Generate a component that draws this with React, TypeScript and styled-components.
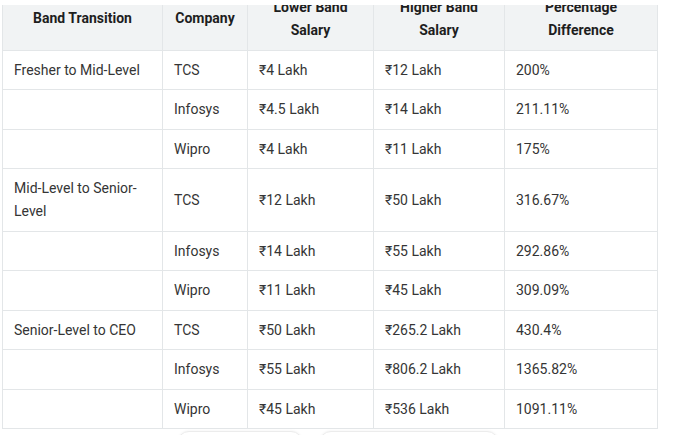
import styled, { createGlobalStyle } from 'styled-components';

const GlobalStyle = createGlobalStyle`
    html, body {
        margin: 0;
        padding: 0;
        background: #ffffff;
    }
`;

const Viewport = styled.div`
    position: relative;
    height: 435px;
    overflow: hidden;
    padding-left: 2px;
    font-family: Roboto, "Noto Sans", "DejaVu Sans", sans-serif;
    font-size: 14px;
    color: #353535;
`;

const TopBar = styled.div`
    position: absolute;
    top: 0;
    left: 0;
    right: 0;
    height: 5px;
    background: #ffffff;
    z-index: 2;
`;

const Table = styled.table`
    margin-top: -13px;
    width: 655px;
    border-collapse: collapse;
    table-layout: fixed;
`;

const HeadCell = styled.th`
    background: #f1f3f4;
    color: #1e1e1e;
    font-weight: 700;
    line-height: 23px;
    padding: 7.75px 12px;
    text-align: center;
    vertical-align: middle;
    border: 1px solid #e3e6e8;
`;

const Cell = styled.td`
    line-height: 23px;
    padding: 8px 11px 7.5px;
    text-align: left;
    vertical-align: middle;
    border: 1px solid #e3e6e8;
`;

const Actions = styled.div`
    display: flex;
    gap: 16px;
    margin: 2px 0 0 175px;
`;

const Pill = styled.div<{ $width: number }>`
    width: ${(p) => p.$width}px;
    height: 34px;
    border: 1px solid #ececec;
    border-radius: 12px;
    background: #ffffff;
    box-shadow: 0 -1px 2px rgba(0, 0, 0, 0.03);
`;

type Row = {
    band: string,
    company: string,
    lower: string,
    higher: string,
    diff: string,
};

const rows: Row[] = [
    { band: 'Fresher to Mid-Level', company: 'TCS', lower: '₹4 Lakh', higher: '₹12 Lakh', diff: '200%' },
    { band: '', company: 'Infosys', lower: '₹4.5 Lakh', higher: '₹14 Lakh', diff: '211.11%' },
    { band: '', company: 'Wipro', lower: '₹4 Lakh', higher: '₹11 Lakh', diff: '175%' },
    { band: 'Mid-Level to Senior-Level', company: 'TCS', lower: '₹12 Lakh', higher: '₹50 Lakh', diff: '316.67%' },
    { band: '', company: 'Infosys', lower: '₹14 Lakh', higher: '₹55 Lakh', diff: '292.86%' },
    { band: '', company: 'Wipro', lower: '₹11 Lakh', higher: '₹45 Lakh', diff: '309.09%' },
    { band: 'Senior-Level to CEO', company: 'TCS', lower: '₹50 Lakh', higher: '₹265.2 Lakh', diff: '430.4%' },
    { band: '', company: 'Infosys', lower: '₹55 Lakh', higher: '₹806.2 Lakh', diff: '1365.82%' },
    { band: '', company: 'Wipro', lower: '₹45 Lakh', higher: '₹536 Lakh', diff: '1091.11%' },
];

const widths = [160, 85, 126, 131, 153];

export default function App() {
    return (
        <Viewport>
            <GlobalStyle />
            <TopBar />
            <Table>
                <colgroup>
                    {widths.map((w, i) => <col key={i} style={{ width: w }} />)}
                </colgroup>
                <thead>
                    <tr>
                        <HeadCell>Band Transition</HeadCell>
                        <HeadCell>Company</HeadCell>
                        <HeadCell>Lower Band Salary</HeadCell>
                        <HeadCell>Higher Band Salary</HeadCell>
                        <HeadCell>Percentage Difference</HeadCell>
                    </tr>
                </thead>
                <tbody>
                    {rows.map((r, i) => (
                        <tr key={i}>
                            <Cell>{r.band}</Cell>
                            <Cell>{r.company}</Cell>
                            <Cell>{r.lower}</Cell>
                            <Cell>{r.higher}</Cell>
                            <Cell>{r.diff}</Cell>
                        </tr>
                    ))}
                </tbody>
            </Table>
            <Actions>
                <Pill $width={124} />
                <Pill $width={178} />
            </Actions>
        </Viewport>
    );
}
